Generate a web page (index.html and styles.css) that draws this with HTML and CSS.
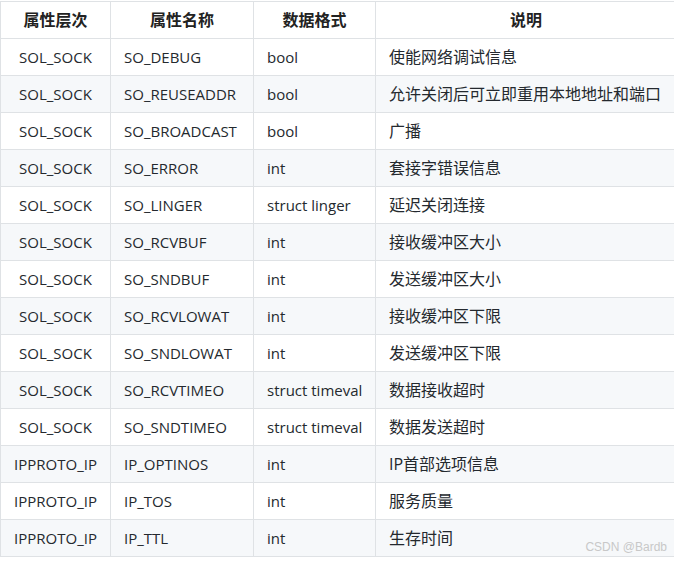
FILE: index.html
```html
<!DOCTYPE html>
<html lang="zh-CN">
<head>
<meta charset="utf-8">
<link rel="stylesheet" href="styles.css">
</head>
<body>
<div class="page">
<table class="opts">
  <colgroup>
    <col class="c1"><col class="c2"><col class="c3"><col class="c4">
  </colgroup>
  <thead>
    <tr><th>属性层次</th><th>属性名称</th><th>数据格式</th><th>说明</th></tr>
  </thead>
  <tbody>
    <tr><td>SOL_SOCK</td><td>SO_DEBUG</td><td>bool</td><td class="zh">使能网络调试信息</td></tr>
    <tr><td>SOL_SOCK</td><td>SO_REUSEADDR</td><td>bool</td><td class="zh">允许关闭后可立即重用本地地址和端口</td></tr>
    <tr><td>SOL_SOCK</td><td>SO_BROADCAST</td><td>bool</td><td class="zh">广播</td></tr>
    <tr><td>SOL_SOCK</td><td>SO_ERROR</td><td>int</td><td class="zh">套接字错误信息</td></tr>
    <tr><td>SOL_SOCK</td><td>SO_LINGER</td><td>struct linger</td><td class="zh">延迟关闭连接</td></tr>
    <tr><td>SOL_SOCK</td><td>SO_RCVBUF</td><td>int</td><td class="zh">接收缓冲区大小</td></tr>
    <tr><td>SOL_SOCK</td><td>SO_SNDBUF</td><td>int</td><td class="zh">发送缓冲区大小</td></tr>
    <tr><td>SOL_SOCK</td><td>SO_RCVLOWAT</td><td>int</td><td class="zh">接收缓冲区下限</td></tr>
    <tr><td>SOL_SOCK</td><td>SO_SNDLOWAT</td><td>int</td><td class="zh">发送缓冲区下限</td></tr>
    <tr><td>SOL_SOCK</td><td>SO_RCVTIMEO</td><td>struct timeval</td><td class="zh">数据接收超时</td></tr>
    <tr><td>SOL_SOCK</td><td>SO_SNDTIMEO</td><td>struct timeval</td><td class="zh">数据发送超时</td></tr>
    <tr><td>IPPROTO_IP</td><td>IP_OPTINOS</td><td>int</td><td class="zh">IP首部选项信息</td></tr>
    <tr><td>IPPROTO_IP</td><td>IP_TOS</td><td>int</td><td class="zh">服务质量</td></tr>
    <tr><td>IPPROTO_IP</td><td>IP_TTL</td><td>int</td><td class="zh">生存时间</td></tr>
  </tbody>
</table>
<span class="watermark">CSDN @Bardb</span>
</div>
</body>
</html>
```

FILE: styles.css
```css
html, body {
  margin: 0;
  padding: 0;
  background: #ffffff;
  overflow: hidden;
}
.page {
  position: relative;
  width: 674px;
  height: 561px;
  overflow: hidden;
  padding-top: 1px;
  box-sizing: border-box;
}
.opts {
  border-collapse: collapse;
  table-layout: fixed;
  width: 676px;
  font-family: "Open Sans", "Noto Sans CJK SC", sans-serif;
  font-size: 15px;
  color: #24292e;
}
.c1 { width: 110px; }
.c2 { width: 143px; }
.c3 { width: 122px; }
.c4 { width: 301px; }
.opts th, .opts td {
  border: 1px solid #dfe2e5;
  padding: 6px 13px;
  line-height: 24px;
  white-space: nowrap;
  text-align: left;
}
.opts th {
  text-align: center;
  font-weight: 700;
  font-size: 16px;
  color: #222;
  background: #fff;
}
.opts td.zh {
  font-size: 16px;
}
.opts td:first-child {
  text-align: center;
  padding: 6px 4px;
}
.opts tbody tr:nth-child(even) td {
  background: #f6f8fa;
}
.watermark {
  position: absolute;
  right: 7px;
  bottom: 7px;
  font-family: "Liberation Sans", sans-serif;
  font-size: 12px;
  color: #c8c8c8;
}
```
